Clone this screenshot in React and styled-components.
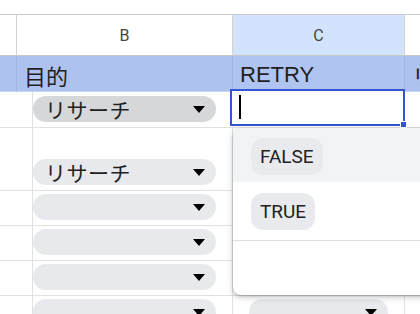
import styled, { createGlobalStyle } from 'styled-components';

const GlobalStyle = createGlobalStyle`
  html, body {
    margin: 0;
    padding: 0;
    background: #fff;
    overflow: hidden;
  }
`;

const rows = [
  { id: 3, height: 36, b: 'リサーチ', active: true, editing: true },
  { id: 4, height: 63, b: 'リサーチ' },
  { id: 5, height: 35, b: '' },
  { id: 6, height: 35, b: '' },
  { id: 7, height: 35, b: '' },
  { id: 8, height: 35, b: '' },
];

const options = ['FALSE', 'TRUE'];

const App = () => {
  return (
    <Page>
      <GlobalStyle />
      <TopGap />
      <Sheet>
        <HeaderCell />
        <HeaderCell>B</HeaderCell>
        <HeaderCell $selected>C</HeaderCell>
        <HeaderCell $last />

        <TitleCell />
        <TitleCell>目的</TitleCell>
        <TitleCell $selected>RETRY</TitleCell>
        <TitleCell $last>リトライ回数</TitleCell>

        {rows.map((row) => (
          <Row key={row.id} $height={row.height}>
            <Cell />
            <Cell>
              <Pill $active={row.active}>
                <PillText>{row.b}</PillText>
                <Arrow />
              </Pill>
            </Cell>
            <Cell>
              {row.editing ? (
                <Editor>
                  <Caret />
                  <Handle />
                </Editor>
              ) : (
                <Pill>
                  <PillText />
                  <Arrow />
                </Pill>
              )}
            </Cell>
            <Cell $last />
          </Row>
        ))}
      </Sheet>

      <Popup>
        {options.map((opt, i) => (
          <Option key={opt} $hover={i === 0}>
            <Chip>{opt}</Chip>
          </Option>
        ))}
        <EmptyOption />
      </Popup>
    </Page>
  );
};

export default App;

const Page = styled.div`
  position: relative;
  width: 420px;
  height: 314px;
  overflow: hidden;
  background: #fff;
`;

const TopGap = styled.div`
  height: 14px;
  border-bottom: 1px solid #c9cbcd;
`;

const Sheet = styled.div`
  display: grid;
  grid-template-columns: 17px 216px 172px 1fr;
  grid-auto-rows: auto;
`;

const HeaderCell = styled.div`
  box-sizing: border-box;
  height: 41px;
  display: flex;
  align-items: center;
  justify-content: center;
  background: ${(p) => (p.$selected ? '#d3e3fd' : '#fff')};
  border-right: ${(p) => (p.$last ? 'none' : '1px solid #d0d2d4')};
  border-bottom: 1px solid #c4c7c9;
  font-family: Roboto, 'Liberation Sans', sans-serif;
  font-size: 16px;
  color: #444746;
`;

const TitleCell = styled.div`
  box-sizing: border-box;
  height: 36px;
  display: flex;
  align-items: center;
  padding: 2px 0 0 7px;
  background: ${(p) => (p.$selected ? '#b0c4f1' : '#adc2ef')};
  border-right: ${(p) => (p.$last ? 'none' : '1px solid #a3b6e0')};
  border-bottom: 1px solid #c8d3ec;
  font-family: 'Liberation Sans', 'Noto Sans CJK JP', sans-serif;
  font-size: 22px;
  color: #1f1f1f;
  white-space: nowrap;
  overflow: hidden;
`;

const Row = styled.div`
  display: contents;

  & > div {
    height: ${(p) => p.$height}px;
  }
`;

const Cell = styled.div`
  position: relative;
  box-sizing: border-box;
  display: flex;
  align-items: flex-end;
  padding: 0 16px 5px 16px;
  border-right: ${(p) => (p.$last ? 'none' : '1px solid #e1e1e1')};
  border-bottom: 1px solid #e1e1e1;
  min-width: 0;
`;

const Pill = styled.div`
  flex: 1;
  height: 26px;
  box-sizing: border-box;
  display: flex;
  align-items: center;
  justify-content: space-between;
  padding: 0 11px 0 12px;
  border-radius: 13px;
  background: ${(p) => (p.$active ? '#d6d7d9' : '#e8e9ed')};
`;

const PillText = styled.span`
  font-family: 'Noto Sans CJK JP', sans-serif;
  font-size: 21px;
  line-height: 1;
  color: #1f1f1f;
  letter-spacing: 0.5px;
`;

const Arrow = styled.span`
  width: 0;
  height: 0;
  border-left: 6px solid transparent;
  border-right: 6px solid transparent;
  border-top: 7px solid #000;
  margin-top: 1px;
`;

const Editor = styled.div`
  position: absolute;
  left: -3px;
  top: -3px;
  width: 175px;
  height: 37px;
  box-sizing: border-box;
  border: 2px solid #3556d0;
  background: #fff;
  z-index: 2;
`;

const Caret = styled.div`
  position: absolute;
  left: 7px;
  top: 4px;
  width: 2px;
  height: 24px;
  background: #000;
`;

const Handle = styled.div`
  position: absolute;
  right: -4px;
  bottom: -4px;
  width: 5px;
  height: 5px;
  background: #3556d0;
  border: 1px solid #fff;
`;

const Popup = styled.div`
  position: absolute;
  left: 233px;
  top: 128px;
  width: 220px;
  height: 167px;
  background: #fff;
  border-radius: 8px;
  box-shadow: 0 2px 6px rgba(60, 64, 67, 0.3), 0 1px 2px rgba(60, 64, 67, 0.25);
  overflow: hidden;
  z-index: 3;
`;

const Option = styled.div`
  height: ${(p) => (p.$hover ? 54 : 59)}px;
  box-sizing: border-box;
  display: flex;
  align-items: flex-start;
  padding: 10px 0 0 18px;
  background: ${(p) => (p.$hover ? '#f1f3f4' : '#fff')};
  & + & {
    padding-top: 11px;
    border-bottom: 1px solid #e0e0e0;
  }
`;

const EmptyOption = styled.div`
  height: 54px;
`;

const Chip = styled.span`
  display: inline-flex;
  align-items: center;
  height: 37px;
  padding: 0 9px;
  border-radius: 12px;
  background: #e8eaed;
  font-family: Roboto, 'Liberation Sans', sans-serif;
  font-size: 19px;
  color: #202124;
`;
